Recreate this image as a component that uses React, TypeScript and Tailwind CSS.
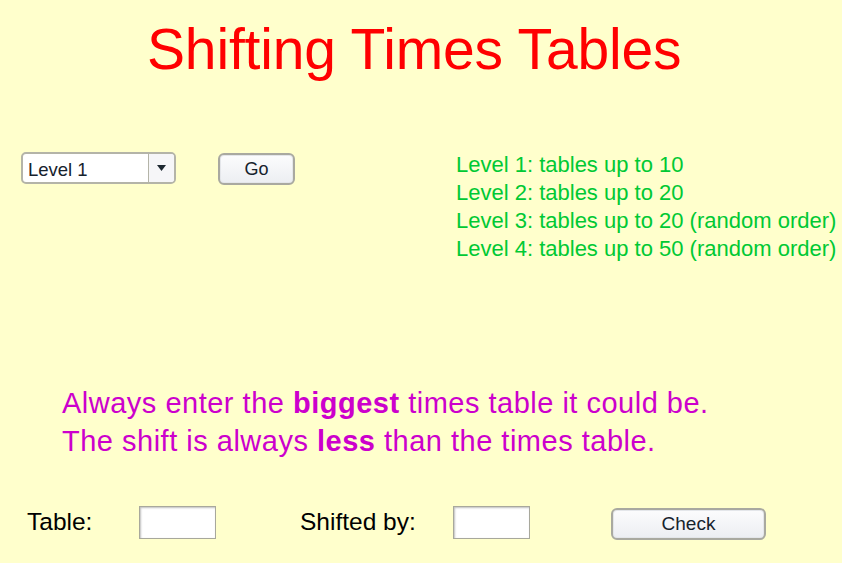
import React from "react";

const font = { fontFamily: '"Liberation Sans", Arial, Helvetica, sans-serif' };

function Btn({ label, w, size }: { label: string; w: string; size: string }) {
  return (
    <button
      className={`${w} ${size} h-[32px] rounded-[6px] border-2 border-[#a9a9a0] bg-gradient-to-b from-[#fcfcfd] to-[#eceef2] text-[#16222c] leading-none shadow-[inset_0_0_0_1px_#e4e6ea]`}
    >
      {label}
    </button>
  );
}

function Field() {
  return (
    <input
      className="w-[77px] h-[33px] bg-white border border-[#a8a89c] shadow-[inset_1px_1px_2px_rgba(0,0,0,0.25)] outline-none"
      type="text"
    />
  );
}

export default function App() {
  return (
    <div
      className="w-[842px] h-[563px] bg-[#ffffcc] overflow-hidden flex flex-col"
      style={font}
    >
      <h1 className="pt-[21px] pl-[147px] text-[57px] leading-[56px] text-[#ff0000] tracking-[-0.15px]">
        Shifting Times Tables
      </h1>

      <div className="flex mt-[74px]">
        <div className="flex items-start pl-[21px]">
          <div className="mt-[1px] w-[155px] h-[32px] flex rounded-[5px] border-2 border-[#b4b4a8] bg-white overflow-hidden">
            <div className="flex-1 flex items-center pl-[5px] pt-[3px] text-[18.5px] text-[#16222c]">
              Level 1
            </div>
            <div className="w-[26px] flex items-center justify-center border-l border-[#b4b4a8] bg-[#f6f6f8]">
              <svg width="9" height="6" viewBox="0 0 9 6">
                <path d="M0 0 H9 L4.5 6 Z" fill="#1d2830" />
              </svg>
            </div>
          </div>
          <div className="ml-[42px] mt-[2px]">
            <Btn label="Go" w="w-[77px]" size="text-[18px]" />
          </div>
        </div>
        <div className="ml-[161px] mt-[0px] text-[22px] leading-[28px] text-[#00c934]">
          <div>Level 1: tables up to 10</div>
          <div>Level 2: tables up to 20</div>
          <div>Level 3: tables up to 20 (random order)</div>
          <div>Level 4: tables up to 50 (random order)</div>
        </div>
      </div>

      <div className="mt-[121px] pl-[62px] text-[29px] leading-[38px] tracking-[0.5px] text-[#cc00cc]">
        <div>
          Always enter the <b>biggest</b> times table it could be.
        </div>
        <div>
          The shift is always <b>less</b> than the times table.
        </div>
      </div>

      <div className="mt-[44px] flex items-center text-[24.5px] text-black">
        <span className="pl-[27px] w-[139px]">Table:</span>
        <Field />
        <span className="ml-[84px] w-[153px]">Shifted by:</span>
        <Field />
        <div className="ml-[81px]">
          <Btn label="Check" w="w-[155px]" size="text-[19px]" />
        </div>
      </div>
    </div>
  );
}
